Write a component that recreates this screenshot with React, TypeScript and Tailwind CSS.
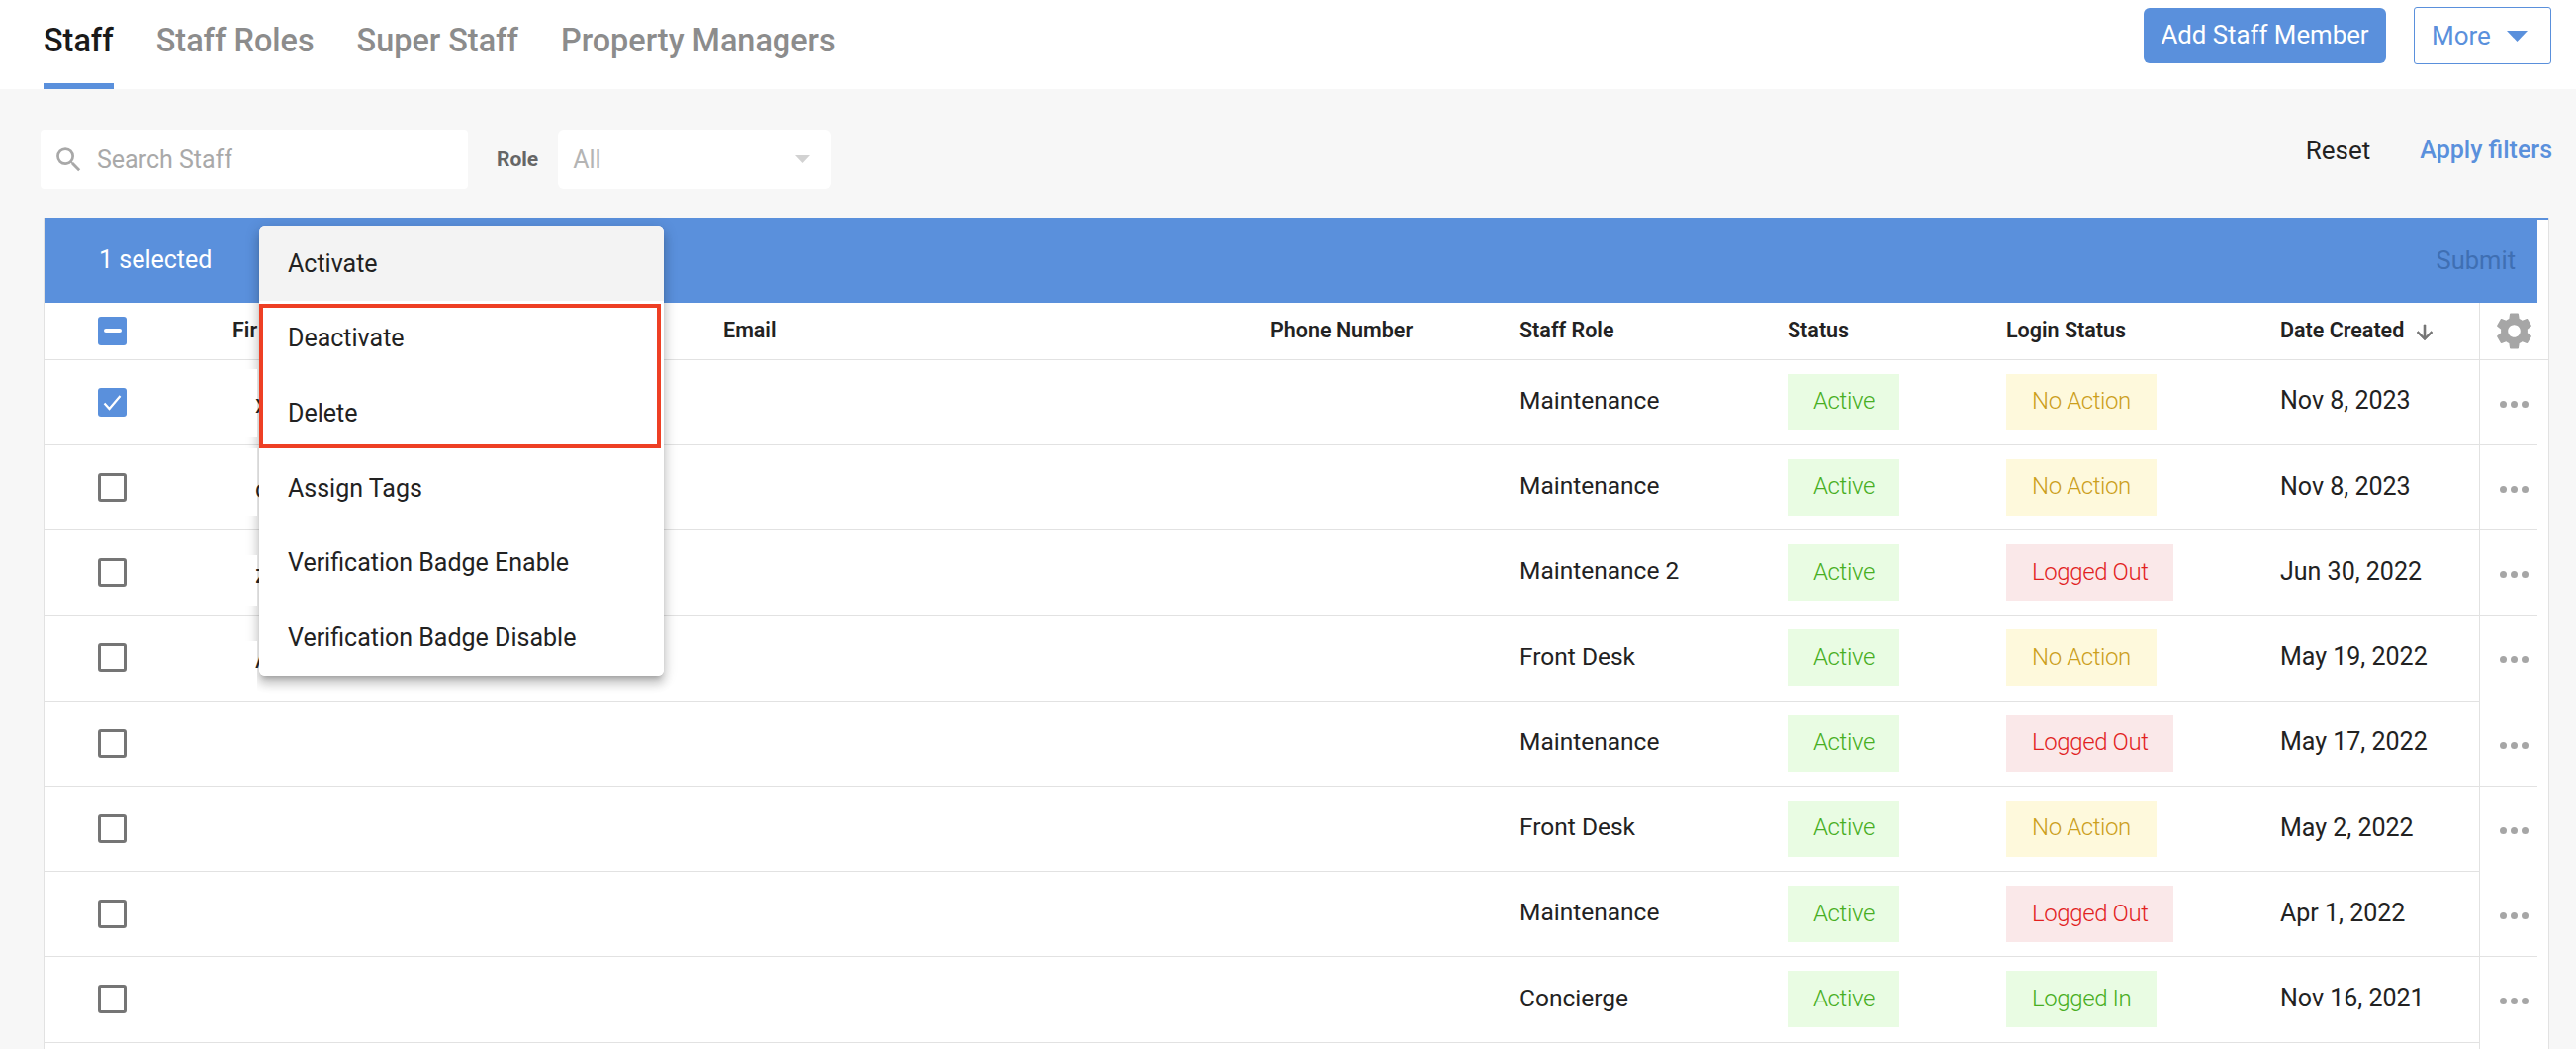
import React from "react";

type Row = { role: string; login: "no" | "out" | "in"; date: string; act: string; checked?: boolean };

const rows: Row[] = [
  { role: "Maintenance", login: "no", date: "Nov 8, 2023", act: "a", checked: true },
  { role: "Maintenance", login: "no", date: "Nov 8, 2023", act: "b" },
  { role: "Maintenance 2", login: "out", date: "Jun 30, 2022", act: "c" },
  { role: "Front Desk", login: "no", date: "May 19, 2022", act: "d" },
  { role: "Maintenance", login: "out", date: "May 17, 2022", act: "b" },
  { role: "Front Desk", login: "no", date: "May 2, 2022", act: "d" },
  { role: "Maintenance", login: "out", date: "Apr 1, 2022", act: "c" },
  { role: "Concierge", login: "in", date: "Nov 16, 2021", act: "d" },
];

const loginInfo = {
  no: { label: "No Action", cls: "bg-[#fef9dc] text-[#cc9f1c] w-[152px]" },
  out: { label: "Logged Out", cls: "bg-[#fae8e9] text-[#e21f1f] w-[169px]" },
  in: { label: "Logged In", cls: "bg-[#e9fce3] text-[#47ae22] w-[152px]" },
};

const gridCols = "grid grid-cols-[190px_496px_553px_252px_271px_221px_277px_201px_1fr]";

function Dots() {
  return (
    <div className="flex gap-[4px] pt-[3px]">
      <span className="w-[7px] h-[7px] rounded-full bg-[#a6a6a6]" />
      <span className="w-[7px] h-[7px] rounded-full bg-[#a6a6a6]" />
      <span className="w-[7px] h-[7px] rounded-full bg-[#a6a6a6]" />
    </div>
  );
}

function Check({ state }: { state: "off" | "on" | "mixed" }) {
  if (state === "off") return <span className="block w-[29px] h-[29px] rounded-[3px] border-[3px] border-[#757575] bg-white" />;
  return (
    <span className="flex items-center justify-center w-[29px] h-[29px] rounded-[3px] bg-[#5a90dc]">
      {state === "on" ? (
        <svg width="23" height="23" viewBox="0 0 23 23" fill="none" stroke="#fff" strokeWidth="2.2">
          <path d="M3.5 12.5 L8.5 18 L19.5 5" />
        </svg>
      ) : (
        <span className="block w-[18px] h-[4px] rounded-[2px] bg-white" />
      )}
    </span>
  );
}

const patches = [
  "top-[373px] h-[69px]",
  "top-[453px] h-[68px]",
  "top-[561px] h-[51px]",
  "top-[648px] h-[58px]",
];

const letters = [
  { t: "x", cls: "top-[390px]" },
  { t: "c", cls: "top-[476px]" },
  { t: "z", cls: "top-[562px]" },
  { t: "A", cls: "top-[648px]" },
];

const menuItems = ["Activate", "Deactivate", "Delete", "Assign Tags", "Verification Badge Enable", "Verification Badge Disable"];

export default function App() {
  return (
    <div className="relative w-[2604px] h-[1060px] overflow-hidden bg-[#f7f7f7] font-['Roboto',sans-serif] text-[25px] text-[#222]">
      <header className="h-[90px] bg-white flex justify-between pl-[44px] pr-[25px]">
        <nav className="flex gap-[43px] text-[32.4px] font-medium text-[#8c8c8c]">
          <div className="relative h-[90px] pt-[17px] text-[#1a1a1a]">
            Staff
            <span className="absolute left-0 right-0 bottom-0 h-[6px] bg-[#5a90dc]" />
          </div>
          <div className="pt-[17px]">Staff Roles</div>
          <div className="pt-[17px]">Super Staff</div>
          <div className="pt-[17px]">Property Managers</div>
        </nav>
        <div className="flex items-start gap-[28px] pt-[7px]">
          <button className="mt-[1px] w-[245px] h-[56px] rounded-[6px] bg-[#5a90dc] text-white text-[25.8px] pb-[2px]">Add Staff Member</button>
          <button className="w-[139px] h-[58px] rounded-[3px] border border-[#5a90dc] bg-white text-[#5a90dc] text-[26px] flex items-center pl-[17px]">
            More
            <svg className="ml-[16px]" width="21" height="11" viewBox="0 0 21 11" fill="#5a90dc">
              <path d="M0 0 H21 L10.5 11 Z" />
            </svg>
          </button>
        </div>
      </header>

      <div className="h-[130px] pt-[41px] pl-[41px] pr-[24px] flex items-start">
        <div className="w-[432px] h-[60px] rounded-[4px] bg-white flex items-center pl-[12px]">
          <svg width="33" height="33" viewBox="0 0 24 24" fill="#a8a8a8">
            <path d="M15.5 14h-.79l-.28-.27A6.471 6.471 0 0 0 16 9.5 6.5 6.5 0 1 0 9.5 16c1.61 0 3.09-.59 4.23-1.57l.27.28v.79l5 4.99L20.49 19l-4.99-5zm-6 0C7.01 14 5 11.99 5 9.5S7.01 5 9.5 5 14 7.01 14 9.5 11.99 14 9.5 14z" />
          </svg>
          <span className="ml-[12px] pt-[2px] text-[#a9a9a9]">Search Staff</span>
        </div>
        <div className="ml-[29px] h-[60px] pt-[1px] flex items-center text-[21px] font-bold text-[#666]">Role</div>
        <div className="ml-[20px] w-[276px] h-[60px] rounded-[6px] bg-white flex items-center justify-between pl-[15px] pr-[21px]">
          <span className="pt-[2px] text-[#b4b4b4]">All</span>
          <svg width="15" height="8" viewBox="0 0 15 8" fill="#d2d2d2">
            <path d="M0 0 H15 L7.5 8 Z" />
          </svg>
        </div>
        <div className="ml-auto h-[42px] flex items-center gap-[50px]">
          <span className="text-[26px] text-[#222]">Reset</span>
          <span className="text-[#5a90dc] font-medium">Apply filters</span>
        </div>
      </div>

      <main className="ml-[44px] w-[2533px] bg-white border-x border-[#e2e2e2]">
        <div className="h-[2px] bg-[#5a90dc]" />
        <div className="mr-[11px] h-[84px] bg-[#5a90dc] flex items-center justify-between pl-[55px] pr-[22px] pb-[2px]">
          <span className="text-white">1 selected</span>
          <span className="text-[#3f6fb3] text-[25.5px]">Submit</span>
        </div>

        <div className={`${gridCols} h-[57.5px] items-center text-[21.5px] font-semibold text-[#222] border-b border-[#e2e2e2]`}>
          <div className="pl-[54px]">
            <Check state="mixed" />
          </div>
          <div>Fir</div>
          <div>Email</div>
          <div>Phone Number</div>
          <div>Staff Role</div>
          <div>Status</div>
          <div>Login Status</div>
          <div className="flex items-center">
            Date Created
            <svg className="ml-[9px] mt-[3px]" width="24" height="24" viewBox="0 0 24 24" fill="#777" stroke="#777" strokeWidth="0.6">
              <path d="M20 12l-1.41-1.41L13 16.17V4h-2v12.17l-5.58-5.59L4 12l8 8 8-8z" />
            </svg>
          </div>
          <div className="h-full border-l border-[#e2e2e2] flex items-center justify-center pr-[1px]">
            <svg width="43" height="43" viewBox="0 0 24 24" fill="#a6a6a6">
              <path d="M19.43 12.98c.04-.32.07-.64.07-.98s-.03-.66-.07-.98l2.11-1.65c.19-.15.24-.42.12-.64l-2-3.46c-.12-.22-.39-.3-.61-.22l-2.49 1c-.52-.4-1.08-.73-1.69-.98l-.38-2.65C14.46 2.18 14.25 2 14 2h-4c-.25 0-.46.18-.49.42l-.38 2.65c-.61.25-1.17.59-1.69.98l-2.49-1c-.23-.09-.49 0-.61.22l-2 3.46c-.13.22-.07.49.12.64l2.11 1.65c-.04.32-.07.65-.07.98s.03.66.07.98l-2.11 1.65c-.19.15-.24.42-.12.64l2 3.46c.12.22.39.3.61.22l2.49-1c.52.4 1.08.73 1.69.98l.38 2.65c.03.24.24.42.49.42h4c.25 0 .46-.18.49-.42l.38-2.65c.61-.25 1.17-.59 1.69-.98l2.49 1c.23.09.49 0 .61-.22l2-3.46c.12-.22.07-.49-.12-.64l-2.11-1.65zM12 15.5c-1.93 0-3.5-1.57-3.5-3.5s1.57-3.5 3.5-3.5 3.5 1.57 3.5 3.5-1.57 3.5-3.5 3.5z" />
            </svg>
          </div>
        </div>

        {rows.map((r, i) => (
          <div key={i} className={`${gridCols} h-[86.25px] items-center`}>
            <div className="h-full flex items-center pl-[54px] border-b border-[#e2e2e2]">
              <Check state={r.checked ? "on" : "off"} />
            </div>
            <div className="h-full border-b border-[#e2e2e2]" />
            <div className="h-full border-b border-[#e2e2e2]" />
            <div className="h-full border-b border-[#e2e2e2]" />
            <div className="h-full flex items-center border-b border-[#e2e2e2] pb-[2px] text-[24.5px]">{r.role}</div>
            <div className="h-full flex items-center border-b border-[#e2e2e2]">
              <span className="h-[57px] w-[113px] pl-[26px] pb-[2px] flex items-center bg-[#e9fce3] text-[#47ae22] text-[24px] font-light tracking-[-0.4px]">Active</span>
            </div>
            <div className="h-full flex items-center border-b border-[#e2e2e2]">
              <span className={`h-[57px] pl-[26px] pb-[2px] flex items-center text-[24px] font-light tracking-[-0.4px] ${loginInfo[r.login].cls}`}>{loginInfo[r.login].label}</span>
            </div>
            <div className="h-full flex items-center border-b border-[#e2e2e2] pb-[2px]">{r.date}</div>
            {r.act === "d" ? (
              <div className="h-full flex items-center justify-center border-l border-[#e2e2e2] pr-[1px]">
                <Dots />
              </div>
            ) : (
              <div className="h-full flex items-center justify-center border-l border-[#e2e2e2] pr-[1px] relative">
                <Dots />
                <span className="absolute left-0 right-[11px] bottom-0 h-px bg-[#e2e2e2]" />
              </div>
            )}
          </div>
        ))}
        <div className={`${gridCols} h-[20px]`}>
          <div className="col-span-8" />
          <div className="border-l border-[#e2e2e2]" />
        </div>
      </main>

      <div className="absolute left-[262px] top-[228px] w-[409px] h-[455px] rounded-[6px] z-10 shadow-[0_5px_5px_-3px_rgba(0,0,0,0.2),0_8px_10px_1px_rgba(0,0,0,0.14),0_3px_14px_2px_rgba(0,0,0,0.12)]" />
      {patches.map((p) => (
        <div key={p} className={`absolute left-[240px] w-[20px] bg-white z-[11] ${p}`} />
      ))}
      {letters.map((l) => (
        <span key={l.t} className={`absolute left-[258px] z-[11] ${l.cls}`}>
          {l.t}
        </span>
      ))}

      <div className="absolute left-[262px] top-[228px] w-[409px] h-[455px] rounded-[6px] bg-white z-[12] overflow-hidden">
        {menuItems.map((m, i) => (
          <div key={m} className={`h-[75.7px] flex items-center pl-[29px] pt-[1px] ${i === 0 ? "bg-[#f3f3f3]" : ""}`}>
            {m}
          </div>
        ))}
      </div>
      <div className="absolute left-[262px] top-[307px] w-[406px] h-[146px] border-[4px] border-[#ee3f24] z-[13]" />
    </div>
  );
}
